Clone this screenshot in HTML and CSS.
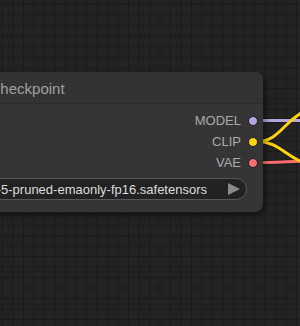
FILE: index.html
```html
<!DOCTYPE html>
<html>
<head>
<meta charset="utf-8">
<link rel="stylesheet" href="styles.css">
</head>
<body>
<div class="canvas">
  <svg class="wires" width="300" height="326" viewBox="0 0 300 326">
    <g fill="none" stroke-linecap="round">
      <path class="wire-outline" d="M257 120.5 L305 120.5"/>
      <path class="wire-outline" d="M257 162.5 C275 162.5 285 162 305 161"/>
      <path class="wire-outline" d="M257 141.5 C280 141.5 283 120 310 108"/>
      <path class="wire-outline" d="M257 141.5 C280 141.5 285 158 312 166"/>
      <path stroke="#b7a3e0" stroke-width="3" d="M257 120.5 L305 120.5"/>
      <path stroke="#ff6e6e" stroke-width="3" d="M257 162.5 C275 162.5 285 162 305 161"/>
      <path stroke="#ffd500" stroke-width="3" d="M257 141.5 C280 141.5 283 120 310 108"/>
      <path stroke="#ffd500" stroke-width="3" d="M257 141.5 C280 141.5 285 158 312 166"/>
    </g>
  </svg>
  <div class="node">
    <div class="node-title">Load Checkpoint</div>
    <div class="outputs">
      <div class="slot"><span class="slot-label">MODEL</span><span class="dot dot-model"></span></div>
      <div class="slot"><span class="slot-label">CLIP</span><span class="dot dot-clip"></span></div>
      <div class="slot"><span class="slot-label">VAE</span><span class="dot dot-vae"></span></div>
    </div>
    <div class="widget">
      <span class="widget-name">ckpt_name</span>
      <span class="widget-value">v1-5-pruned-emaonly-fp16.safetensors</span>
      <svg class="arrow" width="12" height="12" viewBox="0 0 12 12"><polygon points="0,0 12,6 0,12" fill="#8a8a8a"/></svg>
    </div>
  </div>
</div>
</body>
</html>
```

FILE: styles.css
```css
html, body {
  margin: 0;
  padding: 0;
  background: #222222;
}

.canvas {
  position: relative;
  width: 300px;
  height: 326px;
  overflow: hidden;
  background-color: #232323;
  background-image:
    linear-gradient(to right, #1b1b1b 1px, transparent 1px),
    linear-gradient(to bottom, #1b1b1b 1px, transparent 1px);
  background-size: 10.5px 10.5px;
  background-position: 2px 4px;
  font-family: "Liberation Sans", Arial, sans-serif;
}

.wires {
  position: absolute;
  left: 0;
  top: 0;
}

.wire-outline {
  stroke: #1a1a1a;
  stroke-width: 5;
}

.node {
  position: absolute;
  left: -200px;
  top: 72px;
  width: 463px;
  height: 140px;
  background: #353535;
  border-radius: 8px;
  box-shadow: 2px 3px 6px rgba(0, 0, 0, 0.45);
  display: flex;
  flex-direction: column;
}

.node-title {
  height: 31px;
  border-bottom: 1px solid #2c2c2c;
  background: #333333;
  border-radius: 8px 8px 0 0;
  color: #a0a0a0;
  font-size: 15px;
  line-height: 33px;
  padding-left: 152px;
  box-sizing: content-box;
}

.outputs {
  display: flex;
  flex-direction: column;
  padding-top: 6px;
}

.slot {
  height: 21px;
  display: flex;
  align-items: center;
  justify-content: flex-end;
  padding-right: 5px;
  gap: 7px;
}

.slot-label {
  color: #aaaaaa;
  font-size: 13px;
}

.dot {
  width: 8px;
  height: 8px;
  border-radius: 50%;
  border: 1px solid #1e1e1e;
}

.dot-model { background: #b7a3e0; }
.dot-clip { background: #ffd500; }
.dot-vae { background: #ff6e6e; }

.widget {
  margin-top: 5px;
  margin-left: 15px;
  margin-right: 16px;
  height: 20px;
  border: 1px solid #575757;
  border-radius: 11px;
  background: #222222;
  display: flex;
  align-items: center;
  padding-right: 6px;
  padding-left: 14px;
}

.widget-name {
  color: #999999;
  font-size: 13px;
  flex: 1;
}

.widget-value {
  color: #dddddd;
  font-size: 13px;
  margin-right: 21px;
}

.arrow {
  display: block;
}
```
